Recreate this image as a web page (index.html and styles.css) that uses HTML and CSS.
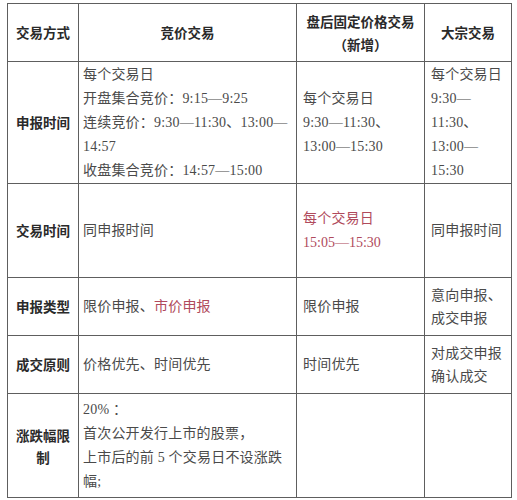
FILE: index.html
```html
<!DOCTYPE html>
<html lang="zh-CN">
<head>
<meta charset="utf-8">
<link rel="stylesheet" href="styles.css">
</head>
<body>
<table class="grid">
  <colgroup>
    <col class="c1"><col class="c2"><col class="c3"><col class="c4">
  </colgroup>
  <tr class="r-head">
    <th>交易方式</th>
    <th>竞价交易</th>
    <th>盘后固定价格交易<br>（新增）</th>
    <th>大宗交易</th>
  </tr>
  <tr class="r1">
    <th>申报时间</th>
    <td>每个交易日<br>开盘集合竞价：9:15—9:25<br>连续竞价：9:30—11:30、13:00—<br>14:57<br>收盘集合竞价：14:57—15:00</td>
    <td>每个交易日<br>9:30—11:30、<br>13:00—15:30</td>
    <td>每个交易日<br>9:30—<br>11:30、<br>13:00—<br>15:30</td>
  </tr>
  <tr class="r2">
    <th>交易时间</th>
    <td>同申报时间</td>
    <td class="red">每个交易日<br><span class="tnum">15:05—15:30</span></td>
    <td>同申报时间</td>
  </tr>
  <tr class="r3">
    <th>申报类型</th>
    <td>限价申报、<span class="red">市价申报</span></td>
    <td>限价申报</td>
    <td>意向申报、<br>成交申报</td>
  </tr>
  <tr class="r4">
    <th>成交原则</th>
    <td>价格优先、时间优先</td>
    <td>时间优先</td>
    <td>对成交申报<br>确认成交</td>
  </tr>
  <tr class="r5">
    <th>涨跌幅限<br>制</th>
    <td>20% ：<br>首次公开发行上市的股票，<br>上市后的前 5 个交易日不设涨跌<br>幅;</td>
    <td></td>
    <td></td>
  </tr>
</table>
</body>
</html>
```
FILE: styles.css
```css
html, body {
  background: #ffffff;
}
body {
  margin: 3px 0 0 7px;
}
.grid {
  border-collapse: collapse;
  table-layout: fixed;
  width: 505px;
}
.c1 { width: 71px; }
.c2 { width: 218px; }
.c3 { width: 128px; }
.c4 { width: 87px; }
.grid th, .grid td {
  border: 1px solid #5e5e5e;
  vertical-align: middle;
  padding: 0;
}
.grid th {
  font-family: "Noto Sans CJK SC", sans-serif;
  font-weight: 700;
  font-size: 13.5px;
  line-height: 23px;
  color: #2a2a2a;
  text-align: center;
}
.grid td {
  font-family: "Liberation Serif", "Noto Sans CJK SC", serif;
  font-weight: 400;
  font-size: 14px;
  letter-spacing: 0.2px;
  line-height: 24px;
  color: #4a4a4a;
  text-align: left;
  padding: 0 2px 0 6px;
}
.grid td:nth-child(2) { padding-left: 4px; }
.r-head { height: 58px; }
.r1 { height: 122px; }
.r2 { height: 94px; }
.r3 { height: 58px; }
.r4 { height: 58px; }
.r5 { height: 104px; }
.r-head th { line-height: 23px; }
.r5 th { line-height: 22px; }
.r3 td:last-child, .r4 td:last-child { line-height: 23px; }
.grid .red {
  color: #b04a5c;
}
.tnum {
  letter-spacing: 0;
}
```
